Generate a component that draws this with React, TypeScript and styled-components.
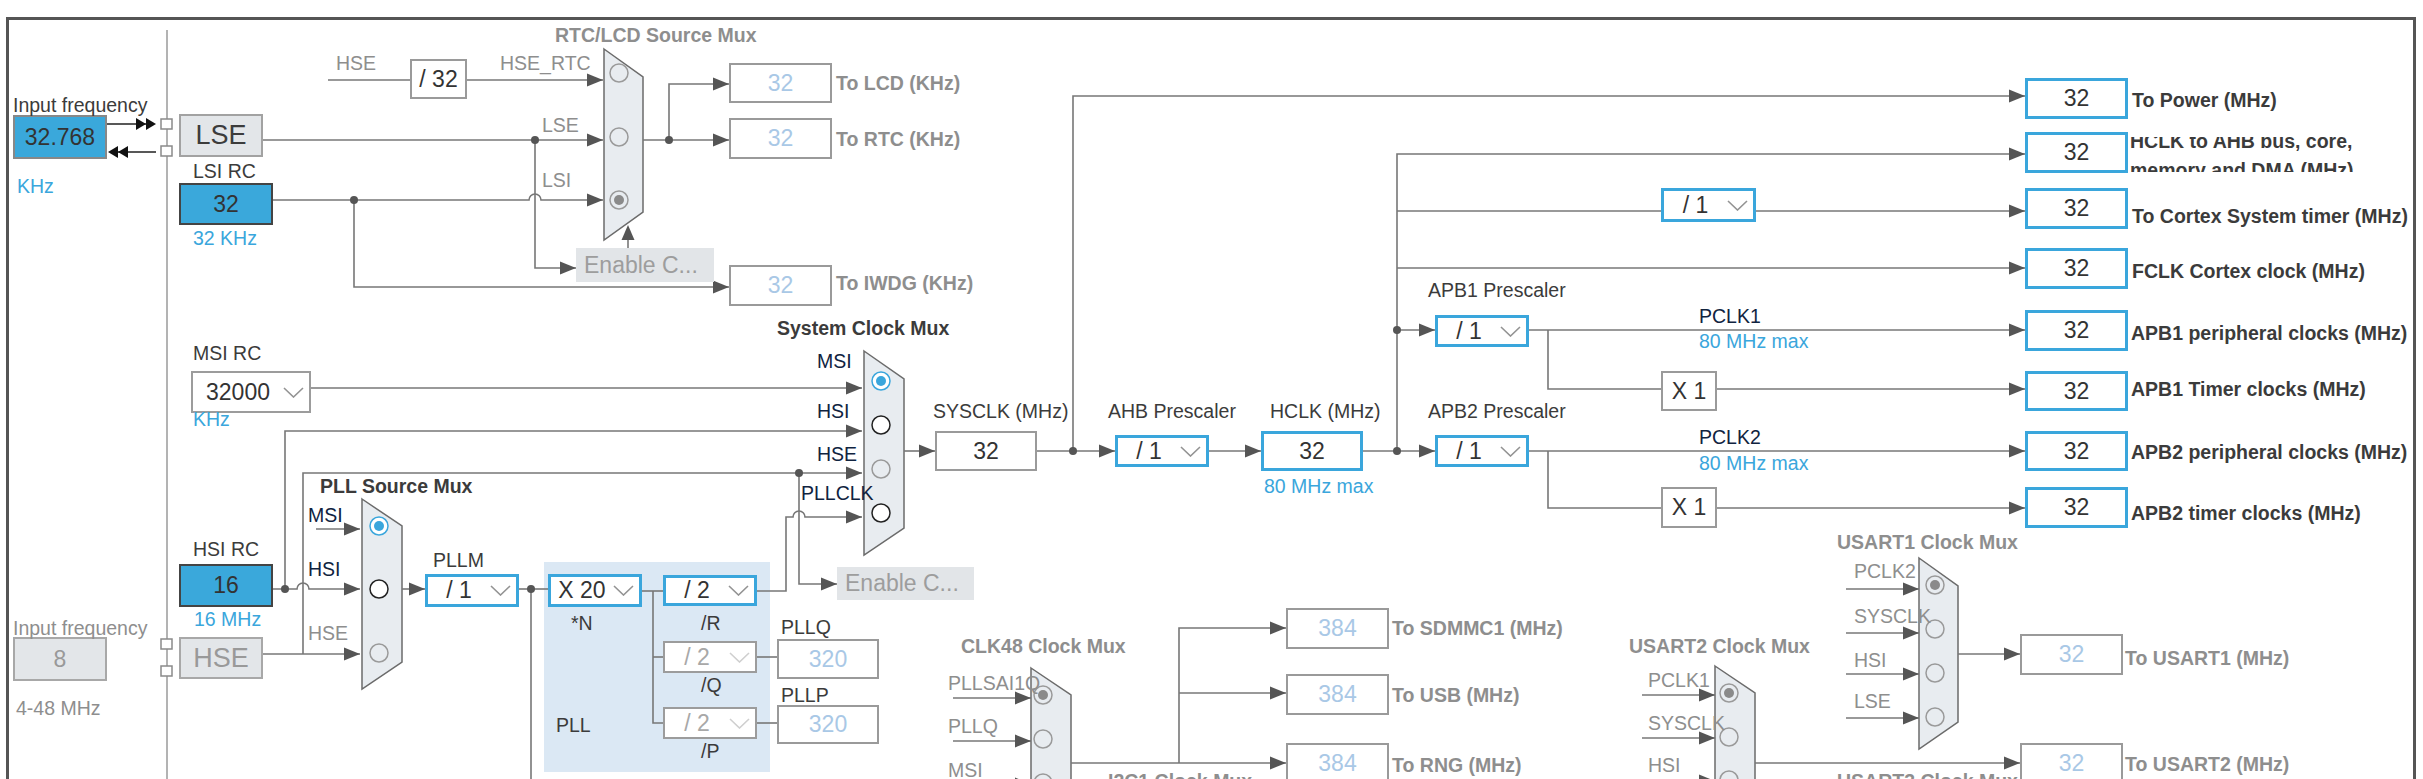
import React from 'react'
import styled, { createGlobalStyle, css } from 'styled-components'

// page coordinates of the frame's inner corner
const OX = 9
const OY = 20

const WIRE = '#777'
const INK = '#555'
const BLUE = '#3aa6dc'

const GlobalStyle = createGlobalStyle`
  html, body {
    margin: 0;
    padding: 0;
    background: #fff;
  }
  body {
    font-family: 'Liberation Sans', Arial, sans-serif;
  }
`

const Page = styled.div`
  width: 2423px;
  height: 779px;
  box-sizing: border-box;
  padding: 17px 0 0 6px;
  overflow: hidden;
  background: #fff;
`

const Frame = styled.div`
  position: relative;
  width: 2410px;
  height: 800px;
  box-sizing: border-box;
  border: 3px solid #555;
  border-bottom: none;
  overflow: hidden;
`

type Pos = { $x: number; $y: number }
type Size = { $w: number; $h: number }

const placed = css<Pos>`
  position: absolute;
  left: ${p => p.$x - OX}px;
  top: ${p => p.$y - OY}px;
`

type Tone = 'dark' | 'gray' | 'blue' | 'navy'
const tones: Record<Tone, string> = {
  dark: '#3b3b3b',
  gray: '#8e8e8e',
  blue: BLUE,
  navy: '#10233f',
}

// $b is the text baseline
const Label = styled.span<{ $x: number; $b: number; $tone: Tone; $bold?: boolean }>`
  position: absolute;
  left: ${p => p.$x - OX}px;
  top: ${p => p.$b - OY - 16.5}px;
  font-size: 19.5px;
  line-height: 1;
  font-weight: ${p => (p.$bold ? 700 : 400)};
  color: ${p => tones[p.$tone]};
  white-space: nowrap;
`

// label squeezed into a box that is too short for it, as in the tool
const ClipLabel = styled.div<Pos & { $h: number }>`
  ${placed};
  height: ${p => p.$h}px;
  overflow: hidden;
  font-size: 19.5px;
  line-height: 29px;
  font-weight: 700;
  color: ${tones.dark};
  white-space: nowrap;
`

const ClipLines = styled.div`
  margin-top: -10px;
`

type BoxKind = 'input' | 'source' | 'osc' | 'oscOff' | 'plain' | 'active' | 'off'
const boxKinds: Record<BoxKind, ReturnType<typeof css>> = {
  input: css`background: #3aa8db; border: 2px solid #888; color: #333;`,
  source: css`background: #3aa8db; border: 2px solid #444; color: #333;`,
  osc: css`background: #e3e6e9; border: 2px solid #a2a2a2; color: #3c3c3c;`,
  oscOff: css`background: #e3e6e9; border: 2px solid #a8a8a8; color: #999;`,
  plain: css`background: #fff; border: 2px solid #9a9a9a; color: #333;`,
  active: css`background: #fff; border: 3px solid ${BLUE}; color: #333;`,
  off: css`background: #fff; border: 2px solid #9a9a9a; color: #a9c8e6;`,
}

const Box = styled.div<Pos & Size & { $kind: BoxKind; $size: number }>`
  ${placed};
  width: ${p => p.$w}px;
  height: ${p => p.$h}px;
  box-sizing: border-box;
  display: flex;
  align-items: center;
  justify-content: center;
  font-size: ${p => p.$size}px;
  ${p => boxKinds[p.$kind]}
`

type SelectTone = 'active' | 'plain' | 'off'
const Select = styled.div<Pos & Size & { $tone: SelectTone }>`
  ${placed};
  width: ${p => p.$w}px;
  height: ${p => p.$h}px;
  box-sizing: border-box;
  display: flex;
  align-items: center;
  padding-right: 5px;
  background: #fff;
  font-size: 23px;
  border: ${p => (p.$tone === 'active' ? `3px solid ${BLUE}` : '2px solid #9c9c9c')};
  color: ${p => (p.$tone === 'off' ? '#a8a8a8' : '#333')};
`

const SelectText = styled.span`
  flex: 1;
  text-align: center;
`

const Chevron = styled.svg<{ $off: boolean }>`
  flex: none;
  stroke: ${p => (p.$off ? '#cfcfcf' : '#939393')};
`

const EnableButton = styled.div<Pos & Size>`
  ${placed};
  width: ${p => p.$w}px;
  height: ${p => p.$h}px;
  box-sizing: border-box;
  display: flex;
  align-items: center;
  padding-left: 8px;
  background: #e2e5e8;
  color: #9d9d9d;
  font-size: 23px;
  white-space: nowrap;
`

const PllZone = styled.div<Pos & Size>`
  ${placed};
  width: ${p => p.$w}px;
  height: ${p => p.$h}px;
  background: #dbe8f4;
`

const Wires = styled.svg`
  position: absolute;
  left: 0;
  top: 0;
  overflow: visible;
`

const wires = [
  'M328 80H410', 'M467 80H603', 'M263 140H603', 'M535 140V268H576',
  'M273 200H529a6 6 0 0 1 12 0H603', 'M354 200V287H729', 'M643 140H729',
  'M669 140V84H729', 'M628 248V230',
  'M311 388H862', 'M273 589H297a6 6 0 0 1 12 0H360', 'M285 589V431H862',
  'M263 654H360', 'M303 654V473H862', 'M799 473V584H837',
  'M757 591H786V517H793a6 6 0 0 1 12 0H862', 'M316 529H360', 'M402 589H425',
  'M519 589H548', 'M531 589V800', 'M642 591H663', 'M653 591V723H663',
  'M653 657H663', 'M757 657H777', 'M757 723H777',
  'M904 451H935', 'M1037 451H1115', 'M1073 451V96H2025', 'M1209 451H1261',
  'M1363 451H1435', 'M1397 451V154H2025', 'M1397 211H1661', 'M1756 211H2025',
  'M1397 268H2025', 'M1397 330H1435', 'M1529 330H2025', 'M1548 330V389H1661',
  'M1717 389H2025', 'M1529 451H2025', 'M1548 451V508H1661', 'M1717 508H2025',
  'M953 698H1031', 'M953 741H1031', 'M953 784H1031',
  'M1071 763H1286', 'M1179 763V628H1286', 'M1179 693H1286',
  'M1642 695H1715', 'M1642 738H1715', 'M1642 781H1715', 'M1755 763H2020',
  'M1846 589H1919', 'M1846 633H1919', 'M1846 674H1919', 'M1846 718H1919',
  'M1958 654H2020',
]

const arrows: [number, number][] = [
  [603, 80], [603, 140], [603, 200], [576, 268], [729, 287], [729, 140], [729, 84],
  [862, 388], [862, 431], [862, 473], [862, 517], [837, 584],
  [360, 529], [360, 589], [360, 654], [425, 589],
  [935, 451], [1115, 451], [1261, 451], [1435, 451], [1435, 330],
  [2025, 96], [2025, 154], [2025, 211], [2025, 268], [2025, 330], [2025, 389],
  [2025, 451], [2025, 508],
  [1031, 698], [1031, 741], [1031, 784],
  [1286, 628], [1286, 693], [1286, 763],
  [1715, 695], [1715, 738], [1715, 781], [2020, 763],
  [1919, 589], [1919, 633], [1919, 674], [1919, 718], [2020, 654],
]

const dots: [number, number][] = [
  [535, 140], [354, 200], [669, 140], [285, 589], [799, 473], [531, 589],
  [1073, 451], [1397, 330], [1397, 451],
]

const muxes = [
  '604,49 643,77 643,212 604,240',
  '864,351 904,379 904,528 864,555',
  '362,499 402,526 402,662 362,689',
  '1031,668 1071,695 1071,900 1031,900',
  '1715,666 1755,693 1755,900 1715,900',
  '1919,558 1958,586 1958,722 1919,749',
]

type RadioKind = 'sel' | 'on' | 'off' | 'offSel'
const radios: [number, number, RadioKind][] = [
  [619, 73, 'off'], [619, 137, 'off'], [619, 200, 'offSel'],
  [881, 381, 'sel'], [881, 425, 'on'], [881, 469, 'off'], [881, 513, 'on'],
  [379, 526, 'sel'], [379, 589, 'on'], [379, 653, 'off'],
  [1043, 695, 'offSel'], [1043, 739, 'off'], [1043, 783, 'off'],
  [1729, 693, 'offSel'], [1729, 737, 'off'], [1729, 780, 'off'],
  [1935, 585, 'offSel'], [1935, 629, 'off'], [1935, 673, 'off'], [1935, 717, 'off'],
]

const ports: [number, number][] = [[161, 119], [161, 146], [161, 639], [161, 666]]

const Radio = ({ x, y, kind }: { x: number; y: number; kind: RadioKind }) => {
  const stroke = kind === 'sel' ? BLUE : kind === 'on' ? '#222' : '#9a9a9a'
  const fill = kind === 'on' || kind === 'sel' ? '#fff' : 'none'
  return (
    <g>
      <circle cx={x} cy={y} r={9} fill={fill} stroke={stroke} strokeWidth={1.5} />
      {kind === 'sel' && <circle cx={x} cy={y} r={5} fill={BLUE} />}
      {kind === 'offSel' && <circle cx={x} cy={y} r={5} fill="#8a8a8a" />}
    </g>
  )
}

const right = (x: number, y: number, w = 16, h = 6.5) =>
  `${x},${y} ${x - w},${y - h} ${x - w},${y + h}`
const left = (x: number, y: number, w = 10, h = 6) =>
  `${x},${y} ${x + w},${y - h} ${x + w},${y + h}`

const Diagram = () => (
  <Wires width={2404} height={780}>
    <g transform={`translate(${-OX} ${-OY})`}>
      <path d="M167 30V800" stroke="#8a8a8a" strokeWidth={1.3} fill="none" />
      {muxes.map(m => (
        <polygon key={m} points={m} fill="#e8ecf0" stroke="#6b6b6b" strokeWidth={1.5} />
      ))}
      {wires.map(d => (
        <path key={d} d={d} stroke={WIRE} strokeWidth={1.6} fill="none" />
      ))}
      {arrows.map(([x, y]) => (
        <polygon key={`${x}-${y}`} points={right(x, y)} fill={INK} />
      ))}
      <polygon points="628,225 621.5,240 634.5,240" fill={INK} />
      {dots.map(([x, y]) => (
        <circle key={`${x}-${y}`} cx={x} cy={y} r={4} fill={INK} />
      ))}
      {radios.map(([x, y, k]) => (
        <Radio key={`${x}-${y}`} x={x} y={y} kind={k} />
      ))}
      <path d="M107 124H146M118 152H156" stroke="#222" strokeWidth={1.6} fill="none" />
      <polygon points={right(146, 124, 10, 6)} fill="#111" />
      <polygon points={right(156, 124, 10, 6)} fill="#111" />
      <polygon points={left(108, 152)} fill="#111" />
      <polygon points={left(118, 152)} fill="#111" />
      {ports.map(([x, y]) => (
        <rect key={`${x}-${y}`} x={x} y={y} width={11} height={10} fill="#fff" stroke="#8a8a8a" strokeWidth={1.5} />
      ))}
    </g>
  </Wires>
)

type L = [number, number, string, Tone, boolean?]
const labels: L[] = [
  [555, 42, 'RTC/LCD Source Mux', 'gray', true],
  [336, 70, 'HSE', 'gray'],
  [500, 70, 'HSE_RTC', 'gray'],
  [542, 132, 'LSE', 'gray'],
  [542, 187, 'LSI', 'gray'],
  [13, 112, 'Input frequency', 'dark'],
  [17, 193, 'KHz', 'blue'],
  [193, 178, 'LSI RC', 'dark'],
  [193, 245, '32 KHz', 'blue'],
  [836, 90, 'To LCD (KHz)', 'gray', true],
  [836, 146, 'To RTC (KHz)', 'gray', true],
  [836, 290, 'To IWDG (KHz)', 'gray', true],
  [1428, 297, 'APB1 Prescaler', 'dark'],
  [2132, 107, 'To Power (MHz)', 'dark', true],
  [2132, 223, 'To Cortex System timer (MHz)', 'dark', true],
  [2132, 278, 'FCLK Cortex clock (MHz)', 'dark', true],
  [193, 360, 'MSI RC', 'dark'],
  [193, 426, 'KHz', 'blue'],
  [777, 335, 'System Clock Mux', 'dark', true],
  [817, 368, 'MSI', 'navy'],
  [817, 418, 'HSI', 'navy'],
  [817, 461, 'HSE', 'navy'],
  [801, 500, 'PLLCLK', 'navy'],
  [933, 418, 'SYSCLK (MHz)', 'dark'],
  [1108, 418, 'AHB Prescaler', 'dark'],
  [1270, 418, 'HCLK (MHz)', 'dark'],
  [1264, 493, '80 MHz max', 'blue'],
  [1428, 418, 'APB2 Prescaler', 'dark'],
  [1699, 323, 'PCLK1', 'navy'],
  [1699, 348, '80 MHz max', 'blue'],
  [1699, 444, 'PCLK2', 'navy'],
  [1699, 470, '80 MHz max', 'blue'],
  [2131, 340, 'APB1 peripheral clocks (MHz)', 'dark', true],
  [2131, 396, 'APB1 Timer clocks (MHz)', 'dark', true],
  [2131, 459, 'APB2 peripheral clocks (MHz)', 'dark', true],
  [2131, 520, 'APB2 timer clocks (MHz)', 'dark', true],
  [320, 493, 'PLL Source Mux', 'dark', true],
  [308, 522, 'MSI', 'navy'],
  [308, 576, 'HSI', 'navy'],
  [308, 640, 'HSE', 'gray'],
  [193, 556, 'HSI RC', 'dark'],
  [194, 626, '16 MHz', 'blue'],
  [13, 635, 'Input frequency', 'gray'],
  [16, 715, '4-48 MHz', 'gray'],
  [433, 567, 'PLLM', 'dark'],
  [571, 630, '*N', 'dark'],
  [556, 732, 'PLL', 'dark'],
  [701, 630, '/R', 'dark'],
  [701, 692, '/Q', 'dark'],
  [701, 758, '/P', 'dark'],
  [781, 634, 'PLLQ', 'dark'],
  [781, 702, 'PLLP', 'dark'],
  [961, 653, 'CLK48 Clock Mux', 'gray', true],
  [948, 690, 'PLLSAI1Q', 'gray'],
  [948, 733, 'PLLQ', 'gray'],
  [948, 777, 'MSI', 'gray'],
  [1392, 635, 'To SDMMC1 (MHz)', 'gray', true],
  [1392, 702, 'To USB (MHz)', 'gray', true],
  [1392, 772, 'To RNG (MHz)', 'gray', true],
  [1629, 653, 'USART2 Clock Mux', 'gray', true],
  [1648, 687, 'PCLK1', 'gray'],
  [1648, 730, 'SYSCLK', 'gray'],
  [1648, 772, 'HSI', 'gray'],
  [1837, 549, 'USART1 Clock Mux', 'gray', true],
  [1854, 578, 'PCLK2', 'gray'],
  [1854, 623, 'SYSCLK', 'gray'],
  [1854, 667, 'HSI', 'gray'],
  [1854, 708, 'LSE', 'gray'],
  [2125, 665, 'To USART1 (MHz)', 'gray', true],
  [2125, 771, 'To USART2 (MHz)', 'gray', true],
  [1108, 788, 'I2C1 Clock Mux', 'gray', true],
  [1837, 788, 'USART3 Clock Mux', 'gray', true],
]

type B = [number, number, number, number, BoxKind, string, number?]
const boxes: B[] = [
  [13, 115, 94, 44, 'input', '32.768'],
  [179, 114, 84, 43, 'osc', 'LSE', 27],
  [410, 59, 57, 40, 'plain', '/ 32'],
  [179, 183, 94, 42, 'source', '32'],
  [729, 63, 103, 40, 'off', '32'],
  [729, 118, 103, 41, 'off', '32'],
  [729, 265, 103, 41, 'off', '32'],
  [2025, 78, 103, 41, 'active', '32'],
  [2025, 132, 103, 41, 'active', '32'],
  [2025, 188, 103, 41, 'active', '32'],
  [2025, 248, 103, 41, 'active', '32'],
  [1261, 431, 102, 40, 'active', '32'],
  [935, 431, 102, 40, 'plain', '32'],
  [1661, 371, 56, 40, 'plain', 'X 1'],
  [1661, 487, 56, 41, 'plain', 'X 1'],
  [2025, 310, 103, 41, 'active', '32'],
  [2025, 371, 103, 40, 'active', '32'],
  [2025, 431, 103, 40, 'active', '32'],
  [2025, 487, 103, 41, 'active', '32'],
  [179, 564, 94, 43, 'source', '16'],
  [13, 637, 94, 44, 'oscOff', '8'],
  [179, 637, 84, 42, 'oscOff', 'HSE', 27],
  [777, 639, 102, 40, 'off', '320'],
  [777, 705, 102, 39, 'off', '320'],
  [1286, 608, 103, 41, 'off', '384'],
  [1286, 674, 103, 41, 'off', '384'],
  [1286, 743, 103, 41, 'off', '384'],
  [2020, 634, 103, 41, 'off', '32'],
  [2020, 743, 103, 41, 'off', '32'],
]

type S = [number, number, number, number, SelectTone, string]
const selects: S[] = [
  [1661, 188, 95, 34, 'active', '/ 1'],
  [1435, 315, 94, 32, 'active', '/ 1'],
  [1435, 435, 94, 32, 'active', '/ 1'],
  [1115, 435, 94, 32, 'active', '/ 1'],
  [191, 371, 120, 42, 'plain', '32000'],
  [425, 574, 94, 33, 'active', '/ 1'],
  [548, 574, 94, 33, 'active', 'X 20'],
  [663, 575, 94, 31, 'active', '/ 2'],
  [663, 641, 94, 32, 'off', '/ 2'],
  [663, 707, 94, 32, 'off', '/ 2'],
]

export default function App() {
  return (
    <>
      <GlobalStyle />
      <Page>
        <Frame>
          <PllZone $x={544} $y={562} $w={226} $h={210} />
          <Diagram />
          {boxes.map(([x, y, w, h, kind, text, size]) => (
            <Box key={`${x}-${y}`} $x={x} $y={y} $w={w} $h={h} $kind={kind} $size={size ?? 23}>
              {text}
            </Box>
          ))}
          {selects.map(([x, y, w, h, tone, text]) => (
            <Select key={`${x}-${y}`} $x={x} $y={y} $w={w} $h={h} $tone={tone}>
              <SelectText>{text}</SelectText>
              <Chevron $off={tone === 'off'} width={21} height={11} viewBox="0 0 21 11" fill="none" strokeWidth={1.6}>
                <polyline points="1,1 10.5,10 20,1" />
              </Chevron>
            </Select>
          ))}
          <EnableButton $x={576} $y={248} $w={138} $h={34}>Enable C...</EnableButton>
          <EnableButton $x={837} $y={567} $w={137} $h={33}>Enable C...</EnableButton>
          <ClipLabel $x={2130} $y={137} $h={35}>
            <ClipLines>
              HCLK to AHB bus, core,
              <br />
              memory and DMA (MHz)
            </ClipLines>
          </ClipLabel>
          {labels.map(([x, b, text, tone, bold]) => (
            <Label key={`${x}-${b}-${text}`} $x={x} $b={b} $tone={tone} $bold={bold}>
              {text}
            </Label>
          ))}
        </Frame>
      </Page>
    </>
  )
}
